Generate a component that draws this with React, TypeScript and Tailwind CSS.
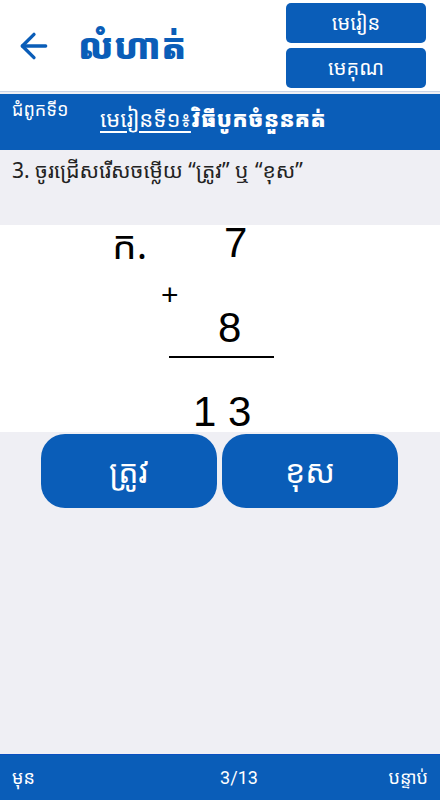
import { ArrowLeft } from "lucide-react";

const KH = "font-['Noto_Sans_Khmer','Khmer_OS','Noto_Sans',sans-serif]";

export default function App() {
  return (
    <div className={`flex h-[800px] w-[440px] flex-col bg-[#efeff4] ${KH}`}>
      {/* header */}
      <div className="flex h-[92px] shrink-0 items-center justify-between border-b border-[#c9d3e6] bg-white pl-[14px] pr-[14px]">
        <div className="flex items-center gap-6">
          <ArrowLeft className="h-10 w-10 text-[#0a5db8]" strokeWidth={2} />
          <span className="text-[36px] font-black text-[#0a5db8]">លំហាត់</span>
        </div>
        <div className="flex w-[140px] flex-col gap-[5px]">
          <button className="h-10 rounded-[5px] bg-[#0a5db8] text-[20px] text-white">មេរៀន</button>
          <button className="h-10 rounded-[5px] bg-[#0a5db8] text-[20px] text-white">មេគុណ</button>
        </div>
      </div>

      {/* lesson bar */}
      <div className="mt-[2px] flex h-[56px] shrink-0 items-start bg-[#0a5db8] px-3 pt-[2px] text-white">
        <span className="w-[88px] text-[18px]">ជំពូកទី១</span>
        <span className="mt-[6px] text-[22px]">
          <span className="underline underline-offset-4">មេរៀនទី១៖</span>
          <span className="font-black">វិធីបូកចំនួនគត់</span>
        </span>
      </div>

      {/* question */}
      <div className="h-[75px] shrink-0 px-3 pt-[5px] text-[21px] text-[#222]">
        3. ចូរជ្រើសរើសចម្លើយ “ត្រូវ” ឬ “ខុស”
      </div>

      {/* problem */}
      <div className="flex h-[207px] shrink-0 flex-col bg-white font-['Liberation_Sans',Arial,sans-serif] text-black">
        <div className="mt-[-3px] flex h-[42px] shrink-0 items-center text-[42px] leading-none">
          <span className={`ml-[112px] w-[112px] text-[39px] ${KH}`}>ក.</span>
          <span>7</span>
        </div>
        <div className="ml-[161px] mt-[16px] h-[30px] shrink-0 text-[30px] leading-none">+</div>
        <div className="ml-[218px] mt-[-3px] h-[42px] shrink-0 text-[42px] leading-none">8</div>
        <div className="ml-[169px] mt-[7px] h-[2px] w-[105px] shrink-0 bg-black" />
        <div className="ml-[193px] mt-[33px] h-[42px] shrink-0 whitespace-pre text-[42px] leading-none">1 3</div>
      </div>

      {/* answers */}
      <div className="flex flex-1 gap-[5px] pl-[41px] pt-[2px]">
        <button className="h-[74px] w-[176px] rounded-[24px] bg-[#0a5db8] text-[32px] text-white">ត្រូវ</button>
        <button className="h-[74px] w-[176px] rounded-[24px] bg-[#0a5db8] text-[32px] text-white">ខុស</button>
      </div>

      {/* footer */}
      <div className="grid h-[46px] shrink-0 grid-cols-[1fr_auto_1fr] items-center border-t border-[#0a4fc0] bg-[#0a5db8] px-3 text-[18px] text-white">
        <span>មុន</span>
        <span className="pl-[38px] font-['Roboto',sans-serif]">3/13</span>
        <span className="text-right">បន្ទាប់</span>
      </div>
    </div>
  );
}
